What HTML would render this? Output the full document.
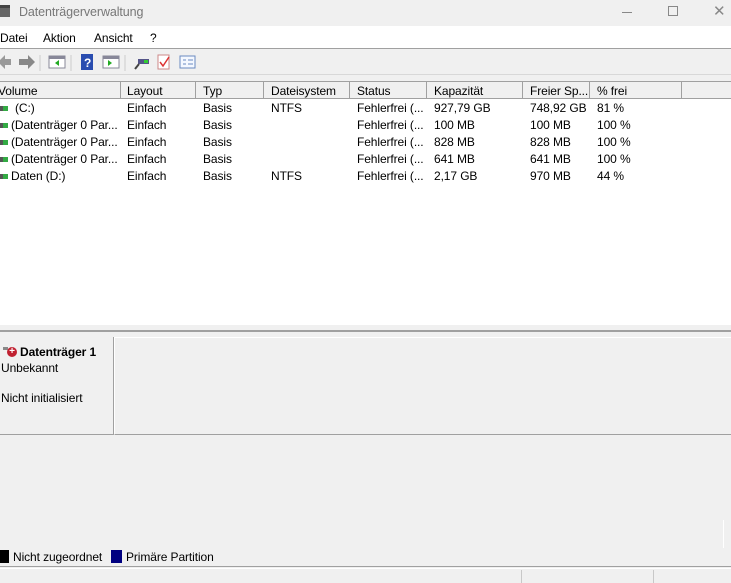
<!DOCTYPE html>
<html><head><meta charset="utf-8"><style>
*{margin:0;padding:0;box-sizing:border-box}
body{width:731px;height:583px;overflow:hidden;background:#f0f0f0;font-family:"Liberation Sans",sans-serif;font-size:12px;letter-spacing:-0.1px;color:#000;position:relative}
.a{position:absolute}
.t{white-space:nowrap}
</style></head><body>
<div class="a" style="left:0;top:0;width:731px;height:26px;background:#f0f0f0"></div>
<div class="a" style="left:-4px;top:5px;width:14px;height:12px;background:#666;border-top:3px solid #444"></div>
<div class="a t" style="left:19px;top:5px;font-size:12.5px;color:#777">Datenträgerverwaltung</div>
<div class="a" style="left:622px;top:12px;width:10px;height:1px;background:#888"></div>
<div class="a" style="left:668px;top:6px;width:10px;height:10px;border:1px solid #888"></div>
<div class="a t" style="left:713px;top:2px;font-size:15px;color:#888">✕</div>
<div class="a" style="left:0;top:26px;width:731px;height:23px;background:#fff;border-bottom:1px solid #a0a0a0"></div>
<div class="a t" style="left:0;top:31px">Datei</div>
<div class="a t" style="left:43px;top:31px">Aktion</div>
<div class="a t" style="left:94px;top:31px">Ansicht</div>
<div class="a t" style="left:150px;top:31px">?</div>
<svg class="a" style="left:0;top:52px" width="200" height="22">
<path d="M-2 10 L5 3 L5 7 L11 7 L11 13 L5 13 L5 17Z" fill="#999"/>
<path d="M35 10 L28 3 L28 7 L19 7 L19 13 L28 13 L28 17Z" fill="#888"/>
<line x1="40" y1="3" x2="40" y2="19" stroke="#ccc"/>
<rect x="49" y="4" width="16" height="12" fill="#fff" stroke="#889"/><rect x="49" y="4" width="16" height="3" fill="#889"/><path d="M59 8 L55 11 L59 14Z" fill="#2a2"/>
<line x1="71" y1="3" x2="71" y2="19" stroke="#ccc"/>
<rect x="81" y="2" width="12" height="16" fill="#2a4db0"/><text x="84" y="15" fill="#fff" font-size="12" font-weight="bold">?</text>
<rect x="103" y="4" width="16" height="12" fill="#fff" stroke="#889"/><rect x="103" y="4" width="16" height="3" fill="#889"/><path d="M108 8 L112 11 L108 14Z" fill="#2a2"/>
<line x1="125" y1="3" x2="125" y2="19" stroke="#ccc"/>
<rect x="138" y="7" width="11" height="5" fill="#558"/><rect x="144" y="8" width="4" height="3" fill="#3c3"/><line x1="139" y1="12" x2="135" y2="17" stroke="#444" stroke-width="2"/>
<rect x="158" y="3" width="11" height="14" fill="#fff" stroke="#c88"/><path d="M160 10 L163 14 L169 5" stroke="#d33" fill="none" stroke-width="1.5"/>
<rect x="180" y="4" width="15" height="12" fill="#f4f8ff" stroke="#6a8ac0"/><path d="M183 8h3M188 8h5M183 12h3M188 12h5" stroke="#6a8ac0"/>
</svg>
<div class="a" style="left:0;top:74px;width:731px;height:1px;background:#d8d8d8"></div>
<div class="a" style="left:0;top:81px;width:731px;height:244px;background:#fff"></div>
<div class="a" style="left:0;top:81px;width:681px;height:18px;background:#f0f0f0;border-bottom:1px solid #a0a0a0;border-top:1px solid #a0a0a0"></div>
<div class="a" style="left:681px;top:81px;width:50px;height:18px;background:#f0f0f0;border-top:1px solid #a0a0a0;border-bottom:1px solid #a0a0a0;border-left:1px solid #a0a0a0"></div>
<div style="position:absolute;left:0;top:81px">
<div class="a" style="left:120px;top:0;width:1px;height:18px;background:#a0a0a0"></div>
<div class="a" style="left:195px;top:0;width:1px;height:18px;background:#a0a0a0"></div>
<div class="a" style="left:263px;top:0;width:1px;height:18px;background:#a0a0a0"></div>
<div class="a" style="left:349px;top:0;width:1px;height:18px;background:#a0a0a0"></div>
<div class="a" style="left:426px;top:0;width:1px;height:18px;background:#a0a0a0"></div>
<div class="a" style="left:522px;top:0;width:1px;height:18px;background:#a0a0a0"></div>
<div class="a" style="left:589px;top:0;width:1px;height:18px;background:#a0a0a0"></div>
</div>
<div class="a t" style="left:-2px;top:84px">Volume</div>
<div class="a t" style="left:127px;top:84px">Layout</div>
<div class="a t" style="left:203px;top:84px">Typ</div>
<div class="a t" style="left:271px;top:84px">Dateisystem</div>
<div class="a t" style="left:357px;top:84px">Status</div>
<div class="a t" style="left:434px;top:84px">Kapazität</div>
<div class="a t" style="left:530px;top:84px">Freier Sp...</div>
<div class="a t" style="left:597px;top:84px">% frei</div>
<div class="a" style="left:0;top:100px;font-size:12px;line-height:17px">
<div style="position:relative;height:85px">
<div class="a t" style="left:0;top:0">
<div style="height:17px"><span style="display:inline-block;width:8px;height:5px;background:#3a4;border-left:3px solid #555;vertical-align:middle;margin-right:7px"></span>(C:)</div>
<div style="height:17px"><span style="display:inline-block;width:8px;height:5px;background:#3a4;border-left:3px solid #555;vertical-align:middle;margin-right:3px"></span>(Datenträger 0 Par...</div>
<div style="height:17px"><span style="display:inline-block;width:8px;height:5px;background:#3a4;border-left:3px solid #555;vertical-align:middle;margin-right:3px"></span>(Datenträger 0 Par...</div>
<div style="height:17px"><span style="display:inline-block;width:8px;height:5px;background:#3a4;border-left:3px solid #555;vertical-align:middle;margin-right:3px"></span>(Datenträger 0 Par...</div>
<div style="height:17px"><span style="display:inline-block;width:8px;height:5px;background:#3a4;border-left:3px solid #555;vertical-align:middle;margin-right:3px"></span>Daten (D:)</div>
</div>
<div class="a t" style="left:127px">Einfach<br>Einfach<br>Einfach<br>Einfach<br>Einfach</div>
<div class="a t" style="left:203px">Basis<br>Basis<br>Basis<br>Basis<br>Basis</div>
<div class="a t" style="left:271px">NTFS<br><br><br><br>NTFS</div>
<div class="a t" style="left:357px">Fehlerfrei (...<br>Fehlerfrei (...<br>Fehlerfrei (...<br>Fehlerfrei (...<br>Fehlerfrei (...</div>
<div class="a t" style="left:434px">927,79 GB<br>100 MB<br>828 MB<br>641 MB<br>2,17 GB</div>
<div class="a t" style="left:530px">748,92 GB<br>100 MB<br>828 MB<br>641 MB<br>970 MB</div>
<div class="a t" style="left:597px">81 %<br>100 %<br>100 %<br>100 %<br>44 %</div>
</div></div>
<div class="a" style="left:0;top:325px;width:731px;height:5px;background:#f0f0f0"></div>
<div class="a" style="left:0;top:330px;width:731px;height:2px;background:#a0a0a0"></div>
<div class="a" style="left:0;top:337px;width:114px;height:98px;background:#f0f0f0;border-right:1px solid #a0a0a0;border-bottom:1px solid #a0a0a0"></div>
<div class="a" style="left:114px;top:337px;width:617px;height:98px;border-bottom:1px solid #a0a0a0;border-left:1px solid #fff;border-top:1px solid #fff"></div>
<div class="a" style="left:3px;top:347px;width:5px;height:3px;background:#888"></div>
<div class="a" style="left:7px;top:347px;width:10px;height:10px;border-radius:50%;background:#c02030;color:#fff;font-size:10px;line-height:10px;text-align:center;font-weight:bold">+</div>
<div class="a t" style="left:20px;top:345px;font-weight:bold">Datenträger 1</div>
<div class="a t" style="left:1px;top:361px">Unbekannt</div>
<div class="a t" style="left:1px;top:391px">Nicht initialisiert</div>
<div class="a" style="left:0;top:549px;width:731px;height:18px;border-bottom:1px solid #a0a0a0"></div>
<div class="a" style="left:0;top:550px;width:9px;height:13px;background:#000"></div>
<div class="a t" style="left:13px;top:550px">Nicht zugeordnet</div>
<div class="a" style="left:111px;top:550px;width:11px;height:13px;background:#000080"></div>
<div class="a t" style="left:126px;top:550px">Primäre Partition</div>
<div class="a" style="left:0;top:568px;width:731px;height:1px;background:#fff"></div>
<div class="a" style="left:521px;top:570px;width:1px;height:13px;background:#c8c8c8"></div>
<div class="a" style="left:653px;top:570px;width:1px;height:13px;background:#c8c8c8"></div>
<div class="a" style="left:723px;top:520px;width:1px;height:28px;background:#fff"></div>
</body></html>
